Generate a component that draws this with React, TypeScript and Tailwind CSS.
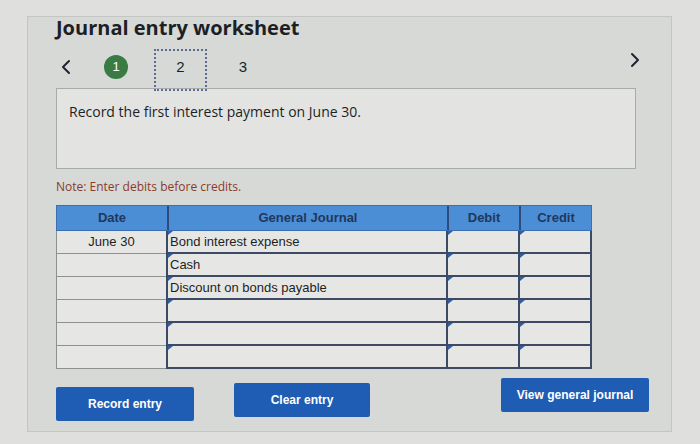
const rows = [
  { date: "June 30", account: "Bond interest expense" },
  { date: "", account: "Cash" },
  { date: "", account: "Discount on bonds payable" },
  { date: "", account: "" },
  { date: "", account: "" },
  { date: "", account: "" },
];

// little blue tab drawn at the top-left of each input cell
const Marker = () => (
  <span className="absolute left-0 top-0 w-0 h-0 border-t-[4px] border-t-[#2f5fa8] border-r-[5px] border-r-transparent" />
);

const Chevron = ({ dir }: { dir: "left" | "right" }) => (
  <svg width="12" height="16" viewBox="0 0 12 16" fill="none">
    <path
      d={dir === "left" ? "M9 2 L3 8 L9 14" : "M3 2 L9 8 L3 14"}
      stroke="#1f2430"
      strokeWidth="2"
      strokeLinecap="round"
      strokeLinejoin="round"
    />
  </svg>
);

const App = () => {
  return (
    <div className="w-[700px] h-[444px] bg-[#dfe0dd] pl-[27px] pt-[16px] overflow-hidden font-['Open_Sans',sans-serif]">
      <div className="w-[645px] h-[416px] bg-[#d7d9d6] border border-[#c4c6c3] pl-[28px] relative">
        {/* Title */}
        <h1 className="text-[20px] leading-none font-bold text-[#1c1f26] pt-[1px]">Journal entry worksheet</h1>

        {/* Step nav */}
        <div className="flex items-center h-[42px] mt-[11px] relative">
          <div className="w-[48px] pl-[4px] mb-[6px] flex items-center"><Chevron dir="left" /></div>
          <div className="w-[24px] h-[24px] mb-[6px] rounded-full bg-[#3a7a45] text-white text-[13px] flex items-center justify-center font-['Liberation_Sans',sans-serif]">1</div>
          <div className="w-[53px] h-[42px] ml-[26px] pb-[5px] border-2 border-dotted border-[#5c6b93] flex items-center justify-center text-[15px] text-[#1c1f26] font-['Liberation_Sans',sans-serif]">2</div>
          <div className="w-[18px] ml-[27px] mb-[6px] text-center text-[15px] text-[#1c1f26] font-['Liberation_Sans',sans-serif]">3</div>
          <div className="absolute left-[573px] top-[3px]"><Chevron dir="right" /></div>
        </div>

        {/* Instruction box */}
        <div className="w-[580px] h-[81px] -mt-[3px] bg-[#e3e4e1] border border-[#a9aba8] px-[12px] pt-[12px] text-[14px] text-[#1c1f26]">
          Record the first interest payment on June 30.
        </div>

        <p className="mt-[9px] text-[12px] text-[#8a3a2c]">Note: Enter debits before credits.</p>

        {/* Journal table */}
        <div className="mt-[9px] w-[536px] font-['Liberation_Sans',sans-serif] text-[13px]">
          <div className="flex h-[26px] bg-[#4b8ed6] text-[#21375c] font-bold border border-[#3b6fb0]">
            <div className="w-[110px] flex items-center justify-center">Date</div>
            <div className="w-[280px] flex items-center justify-center border-l-2 border-[#2e4c7a]">General Journal</div>
            <div className="w-[72px] flex items-center justify-center border-l-2 border-[#2e4c7a]">Debit</div>
            <div className="flex-1 flex items-center justify-center border-l-2 border-[#2e4c7a]">Credit</div>
          </div>
          {rows.map((r, i) => (
            <div key={i} className="flex h-[23px] bg-[#e6e7e4]">
              <div className="w-[110px] border-l border-b border-[#8f918e] flex items-center justify-center text-[#1c1f26]">{r.date}</div>
              <div className="w-[280px] relative border-l-2 border-b-2 border-[#3d4a66] flex items-center pl-[2px] text-[#1c1f26]">
                <Marker />
                {r.account}
              </div>
              <div className="w-[72px] relative border-l-2 border-b-2 border-[#3d4a66]"><Marker /></div>
              <div className="flex-1 relative border-l-2 border-r-2 border-b-2 border-[#3d4a66]"><Marker /></div>
            </div>
          ))}
        </div>

        {/* Buttons */}
        <div className="flex items-start mt-[14px] font-['Liberation_Sans',sans-serif] text-[12px] font-bold text-white">
          <button className="w-[138px] h-[34px] mt-[4px] bg-[#1f5cb3] rounded-[2px]">Record entry</button>
          <button className="w-[136px] h-[34px] ml-[40px] bg-[#1f5cb3] rounded-[2px]">Clear entry</button>
          <button className="w-[148px] h-[34px] ml-[131px] -mt-[5px] bg-[#1f5cb3] rounded-[2px]">View general journal</button>
        </div>
      </div>
    </div>
  );
};

export default App;
